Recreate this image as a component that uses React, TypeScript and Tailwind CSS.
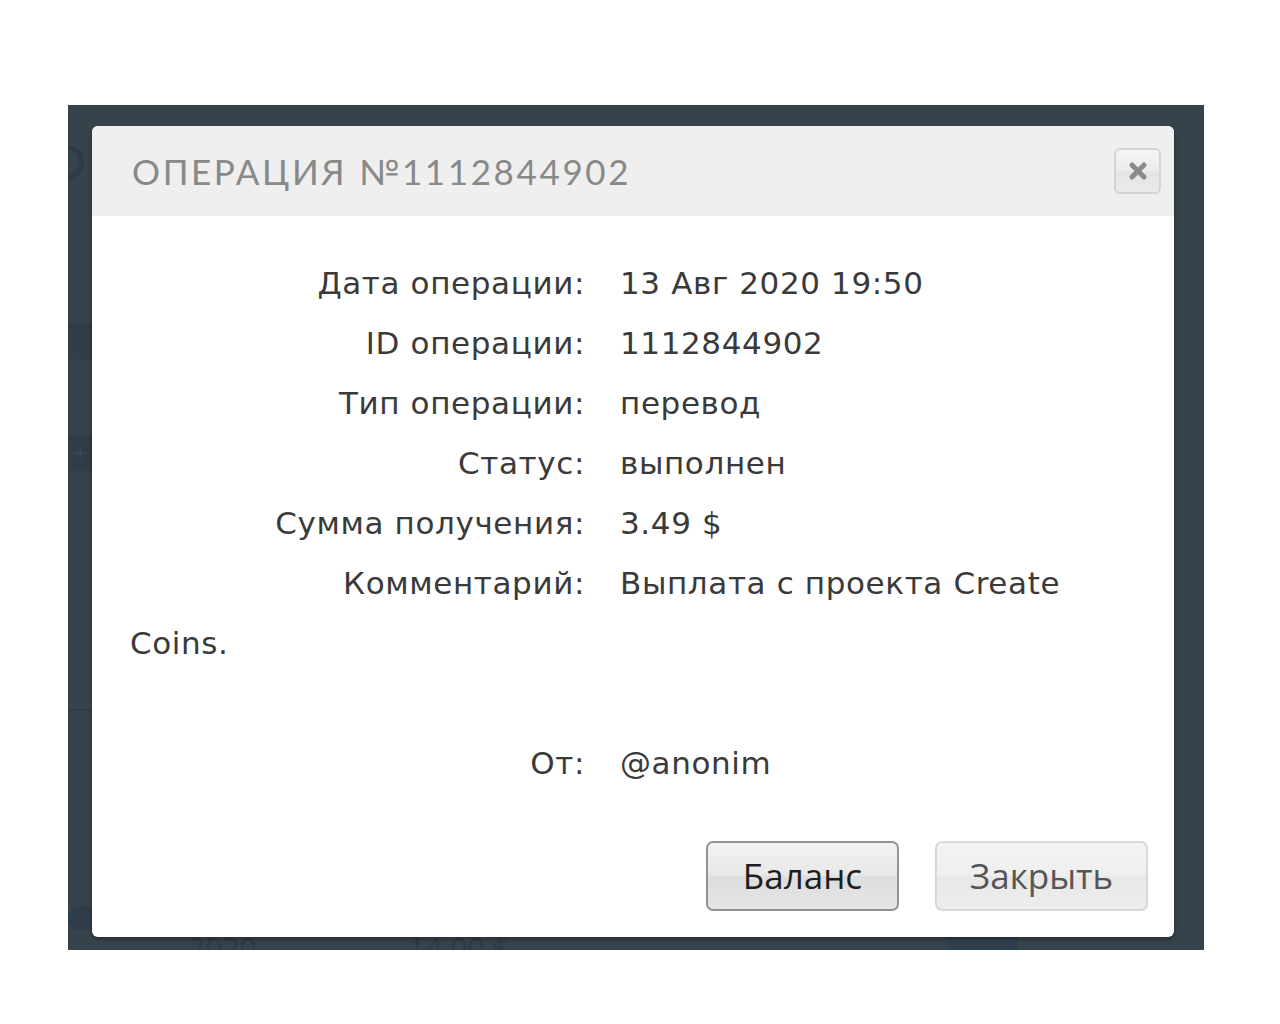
import React from "react";

const rows: [string, string][] = [
  ["Дата операции:", "13 Авг 2020 19:50"],
  ["ID операции:", "1112844902"],
  ["Тип операции:", "перевод"],
  ["Статус:", "выполнен"],
  ["Сумма получения:", "3.49 $"],
  ["Комментарий:", "Выплата с проекта Create Coins."],
];

function Row({ label, value }: { label: string; value: string }) {
  return (
    <div>
      <span className="inline-block w-[455px] text-right">{label}</span>
      <span className="ml-[35px]">{value}</span>
    </div>
  );
}

export default function App() {
  return (
    <div className="w-[1280px] h-[1024px] bg-white overflow-hidden">
      <div className="ml-[68px] mt-[105px] w-[1136px] h-[845px] bg-[#37434a] relative overflow-hidden flex">
        {/* underlying page: sidebar strip */}
        <div className="w-[24px] shrink-0 flex flex-col pt-[40px]">
          <div className="w-[16px] h-[34px] rounded-r-full border-[5px] border-l-0 border-[#2f3a41]" />
          <div className="mt-[144px] w-[24px] h-[36px] bg-[#323d44]" />
          <div className="mt-[76px] w-[24px] h-[36px] bg-[#313c43] flex items-center justify-center text-[#3c4950] text-[24px] leading-none">+</div>
          <div className="mt-[238px] w-[24px] h-[2px] bg-[#2f3a41]" />
          <div className="mt-[194px] w-[26px] h-[26px] rounded-full bg-[#2f3d4a]" />
        </div>

        {/* underlying page: table row peeking below modal */}
        <div className="absolute left-[120px] top-[828px] text-[#2f3a41] text-[30px] leading-none font-['Open_Sans',sans-serif]">2020</div>
        <div className="absolute left-[340px] top-[828px] text-[#2f3a41] text-[30px] leading-none font-['Open_Sans',sans-serif]">14.00 $</div>
        <div className="absolute left-[880px] top-[826px] w-[70px] h-[19px] bg-[#2e3e4c]" />

        <div className="relative mt-[21px] w-[1082px] h-[811px] bg-white rounded-[6px] overflow-hidden shadow-[0_2px_4px_rgba(0,0,0,0.35)] flex flex-col">
          <div className="h-[90px] bg-[#efefef] flex items-center justify-between pl-[40px] pr-[13px] shrink-0">
            <div className="font-['Lato',sans-serif] text-[35px] tracking-[0.075em] text-[#898989] leading-none">
              ОПЕРАЦИЯ №1112844902
            </div>
            <div className="w-[47px] h-[46px] rounded-[6px] border-2 border-[#d4d4d4] bg-[linear-gradient(to_bottom,#f4f4f4,#ececec_50%,#e4e4e4_52%,#ebebeb)] flex items-center justify-center">
              <svg width="20" height="20" viewBox="0 0 20 20">
                <path d="M4 4 L16 16 M16 4 L4 16" stroke="#8a8a8a" strokeWidth="5" strokeLinecap="round" />
              </svg>
            </div>
          </div>
          <div className="pt-[37px] px-[38px] font-['DejaVu_Sans',sans-serif] text-[31px] tracking-[0.02em] leading-[60px] text-[#3a3a3a]">
            {rows.map(([label, value]) => (
              <Row key={label} label={label} value={value} />
            ))}
            <div className="h-[60px]" />
            <Row label="От:" value="@anonim" />
          </div>
          <div className="mt-[48px] flex justify-end gap-[36px] pr-[26px] font-['Open_Sans',sans-serif] text-[35px]">
            <div className="w-[193px] h-[70px] rounded-[7px] border-2 border-[#939393] bg-[linear-gradient(to_bottom,#f2f2f2,#e8e8e8_48%,#dddddd_52%,#e6e6e6)] flex items-center justify-center text-[#1e1e1e]">
              Баланс
            </div>
            <div className="w-[213px] h-[70px] rounded-[7px] border-2 border-[#d8d8d8] bg-[linear-gradient(to_bottom,#f3f3f3,#efefef_48%,#e8e8e8_52%,#ededed)] flex items-center justify-center text-[#555555]">
              Закрыть
            </div>
          </div>
        </div>
      </div>
    </div>
  );
}
